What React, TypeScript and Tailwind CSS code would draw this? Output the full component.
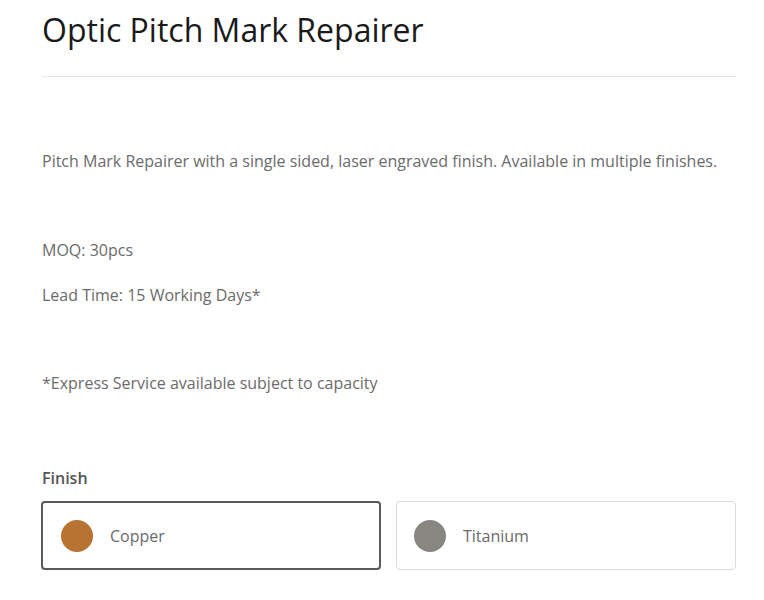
const finishes = [
  { name: 'Copper', color: '#b87333', selected: true },
  { name: 'Titanium', color: '#878681', selected: false },
];

export default function App() {
  return (
    <div className="min-h-screen bg-white font-['Open_Sans',sans-serif]">
      <div className="ml-[42px] w-[694px]">
        <h1 className="pt-[10px] text-[32px] leading-[40px] text-[#1a1a1a]">Optic Pitch Mark Repairer</h1>
        <div className="mt-[26px] h-px bg-[#e6e6e6]" />

        <div className="text-[16px] leading-[24px] text-[#6b6b6b]">
          <p className="mt-[72px]">
            Pitch Mark Repairer with a single sided, laser engraved finish. Available in multiple finishes.
          </p>
          <p className="mt-[65px]">MOQ: 30pcs</p>
          <p className="mt-[21px]">Lead Time: 15 Working Days*</p>
          <p className="mt-[64px]">*Express Service available subject to capacity</p>
        </div>

        <p className="mt-[71px] text-[16px] font-semibold leading-[24px] text-[#555]">Finish</p>

        <div className="-ml-px mt-[11px] grid w-[695px] grid-cols-2 gap-[15px]">
          {finishes.map((f) => (
            <div
              key={f.name}
              className={`flex h-[69px] items-center gap-[17px] rounded-[4px] bg-white ${
                f.selected ? 'border-2 border-[#5a5a5a] pl-[18px]' : 'border border-[#dcdcdc] pl-[17px]'
              }`}
            >
              <span className="h-[32px] w-[32px] rounded-full" style={{ backgroundColor: f.color }} />
              <span className="text-[16px] text-[#6b6b6b]">{f.name}</span>
            </div>
          ))}
        </div>
      </div>
    </div>
  );
}
